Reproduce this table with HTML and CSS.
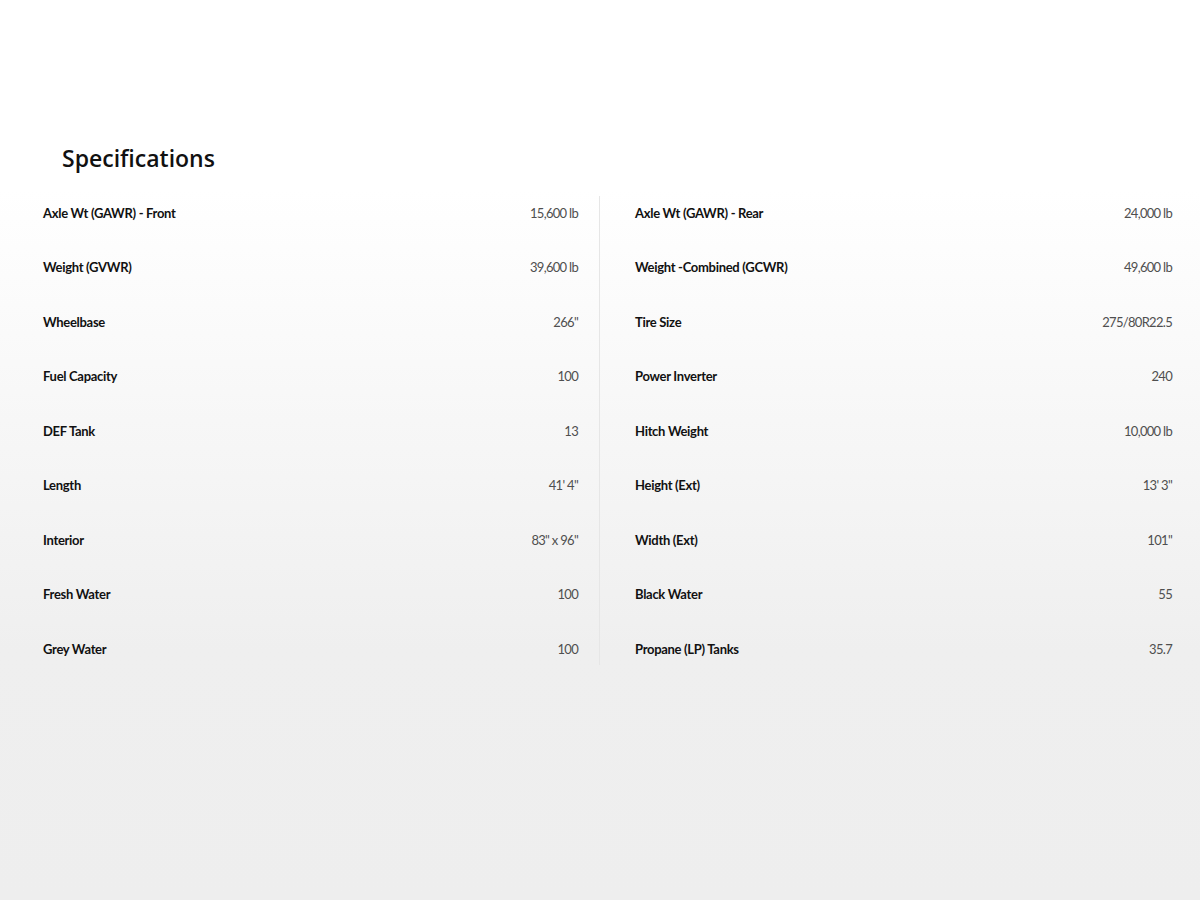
FILE: index.html
```html
<!DOCTYPE html>
<html lang="en">
<head>
  <meta charset="UTF-8">
  <meta name="viewport" content="width=device-width, initial-scale=1.0">
  <title>Specifications</title>
  <link rel="stylesheet" href="styles.css">
</head>
<body>
  <section class="specs">
    <h2>Specifications</h2>
    <div class="spec-columns">
      <ul class="spec-list left">
        <li><span class="spec-name">Axle Wt (GAWR) - Front</span><span class="spec-value">15,600 lb</span></li>
        <li><span class="spec-name">Weight (GVWR)</span><span class="spec-value">39,600 lb</span></li>
        <li><span class="spec-name">Wheelbase</span><span class="spec-value">266"</span></li>
        <li><span class="spec-name">Fuel Capacity</span><span class="spec-value">100</span></li>
        <li><span class="spec-name">DEF Tank</span><span class="spec-value">13</span></li>
        <li><span class="spec-name">Length</span><span class="spec-value">41' 4"</span></li>
        <li><span class="spec-name">Interior</span><span class="spec-value">83" x 96"</span></li>
        <li><span class="spec-name">Fresh Water</span><span class="spec-value">100</span></li>
        <li><span class="spec-name">Grey Water</span><span class="spec-value">100</span></li>
      </ul>
      <ul class="spec-list right">
        <li><span class="spec-name">Axle Wt (GAWR) - Rear</span><span class="spec-value">24,000 lb</span></li>
        <li><span class="spec-name">Weight -Combined (GCWR)</span><span class="spec-value">49,600 lb</span></li>
        <li><span class="spec-name">Tire Size</span><span class="spec-value">275/80R22.5</span></li>
        <li><span class="spec-name">Power Inverter</span><span class="spec-value">240</span></li>
        <li><span class="spec-name">Hitch Weight</span><span class="spec-value">10,000 lb</span></li>
        <li><span class="spec-name">Height (Ext)</span><span class="spec-value">13' 3"</span></li>
        <li><span class="spec-name">Width (Ext)</span><span class="spec-value">101"</span></li>
        <li><span class="spec-name">Black Water</span><span class="spec-value">55</span></li>
        <li><span class="spec-name">Propane (LP) Tanks</span><span class="spec-value">35.7</span></li>
      </ul>
    </div>
  </section>
</body>
</html>
```

FILE: styles.css
```css
html {
  min-height: 100%;
  background: linear-gradient(#ffffff 0, #ffffff 190px, #efefef 650px, #eeeeee 100%);
}

body {
  margin: 0;
  padding: 143px 0 0;
  font-family: Lato, "Open Sans", sans-serif;
  color: #111111;
}

.specs h2 {
  margin: 0 0 22px 62px;
  font-family: "Open Sans", sans-serif;
  font-size: 23px;
  font-weight: 600;
  line-height: 31px;
  color: #111111;
}

.spec-columns {
  display: flex;
}

.spec-list {
  list-style: none;
  margin: 0;
  display: flex;
  flex-direction: column;
  gap: 21.5px;
}

.spec-list.left {
  width: 600px;
  box-sizing: border-box;
  padding: 0 21px 0 43px;
  border-right: 1px solid #e6e6e6;
}

.spec-list.right {
  flex: 1;
  padding: 0 28px 0 35px;
}

.spec-list li {
  display: flex;
  justify-content: space-between;
  align-items: center;
  height: 33px;
  font-size: 13px;
}

.spec-name {
  font-weight: 700;
  letter-spacing: -0.3px;
  color: #111111;
}

.spec-value {
  letter-spacing: -0.7px;
  color: #4f4f4f;
}
```
